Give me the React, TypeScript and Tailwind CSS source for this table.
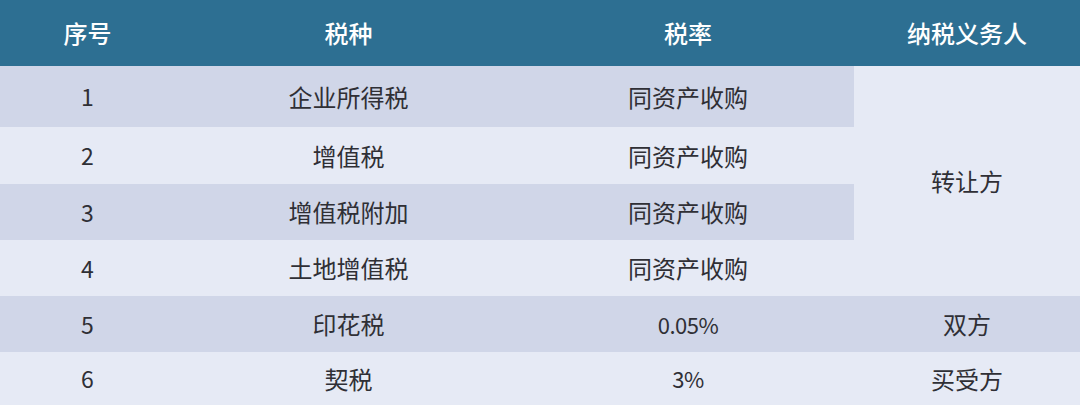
import React from "react";

const rows = [
  { no: "1", name: "企业所得税", rate: "同资产收购", dark: true },
  { no: "2", name: "增值税", rate: "同资产收购", dark: false },
  { no: "3", name: "增值税附加", rate: "同资产收购", dark: true },
  { no: "4", name: "土地增值税", rate: "同资产收购", dark: false },
];

const cell = "flex items-center justify-center";

const App = () => {
  return (
    <div
      className="w-[1080px] h-[405px] grid grid-cols-[175px_347px_332px_226px] grid-rows-[66px_61px_57px_56px_56px_56px_53px] text-[24px] text-[#2f2f35] bg-[#e6eaf5]"
      style={{ fontFamily: '"Noto Sans CJK SC", "Noto Sans", sans-serif' }}
    >
      {/* Header */}
      {["序号", "税种", "税率", "纳税义务人"].map((h) => (
        <div key={h} className={`${cell} bg-[#2d6f92] text-white font-medium`}>
          {h}
        </div>
      ))}

      {/* Rows 1-4 with merged payer cell */}
      {rows.map((r, i) => (
        <React.Fragment key={r.no}>
          <div className={`${cell} text-[23px] ${r.dark ? "bg-[#d0d6e8]" : "bg-[#e6eaf5]"}`}>{r.no}</div>
          <div className={`${cell} ${r.dark ? "bg-[#d0d6e8]" : "bg-[#e6eaf5]"}`}>{r.name}</div>
          <div className={`${cell} ${r.dark ? "bg-[#d0d6e8]" : "bg-[#e6eaf5]"}`}>{r.rate}</div>
          {i === 0 && (
            <div className={`${cell} row-span-4 bg-[#e6eaf5]`}>转让方</div>
          )}
        </React.Fragment>
      ))}

      {/* Row 5 */}
      <div className={`${cell} text-[23px] bg-[#d0d6e8]`}>5</div>
      <div className={`${cell} bg-[#d0d6e8]`}>印花税</div>
      <div className={`${cell} text-[22px] tracking-[-0.5px] bg-[#d0d6e8]`}>0.05%</div>
      <div className={`${cell} bg-[#d0d6e8]`}>双方</div>

      {/* Row 6 */}
      <div className={`${cell} text-[23px] bg-[#e6eaf5]`}>6</div>
      <div className={`${cell} bg-[#e6eaf5]`}>契税</div>
      <div className={`${cell} text-[22px] tracking-[-0.5px] bg-[#e6eaf5]`}>3%</div>
      <div className={`${cell} bg-[#e6eaf5]`}>买受方</div>
    </div>
  );
};

export default App;
